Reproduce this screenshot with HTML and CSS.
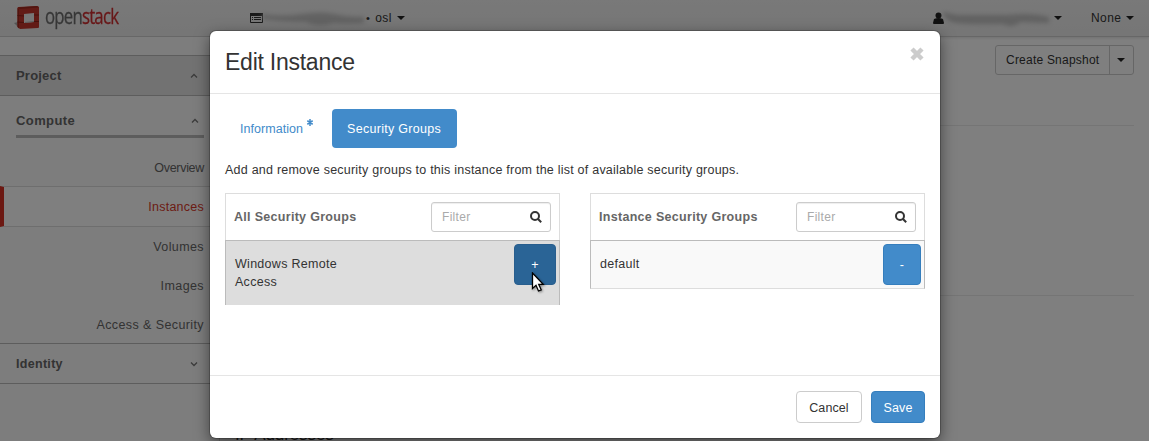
FILE: index.html
```html
<!DOCTYPE html>
<html lang="en">
<head>
<meta charset="utf-8">
<title>Edit Instance</title>
<link rel="stylesheet" href="styles.css">
</head>
<body>
<div class="page">
  <header class="topbar">
    <div class="brand">
      <svg class="logo" width="27" height="25" viewBox="0 0 27 25"><path fill="#aaa" d="M0 18l4-1v5z"/><path fill="#c5372c" d="M3.500 3q0-1 1-1L23 1q2 0 2 1.500V22q0 1-1 1L6 24l-2.500-2z"/><path fill="#a32a20" d="M3.500 3l1.500 1v19.500l-1.500-1.500zM4 2.500L23 1l2 1.500L6 4z"/><path fill="#eee" d="M10 9l10-1v9l-10 1z"/><path fill="#b9b9b9" d="M11 17l9-1v1l-9 1z"/><path stroke="#8f2219" d="M3.500 10.500l6.500.5M3.500 17l6.500.5M20 10h5M20 16.500h5" fill="none"/></svg>
      <span class="wordmark">open<b>stack</b></span>
    </div>
    <div class="context">
      <svg width="13" height="12" viewBox="0 0 13 12"><path fill="none" stroke="#333" d="M.5 1.500h12v9H.5z"/><path fill="#333" d="M0 1h13v3H0zM2 5h1v1H2zm2 0h7v1H4zM2 7h1v1H2zm2 0h7v1H4z"/></svg>
      <svg class="smudge" width="103" height="15" viewBox="0 0 103 15"><path d="M0 3Q20 6 40 3t32 0 30 3v6q-18 1-30 0-16 5-28-1-24 0-43-3z"/></svg>
      <span class="dot">•</span><span class="region">osl</span><i class="caret"></i>
    </div>
    <div class="account">
      <svg width="11" height="12" viewBox="0 0 11 12"><circle cx="5.500" cy="3.500" r="3" fill="#222"/><path fill="#222" d="M1 7q4.500-2 9 0l1 4q0 1-1 1H1q-1 0-1-1z"/></svg>
      <svg class="smudge" width="108" height="15" viewBox="0 0 108 15"><path d="M0 1l14 3q40 0 50 0 24-3 42 2v6q-14 0-28-1-10 7-18 2-30 1-48-1-9-2-12-9z"/></svg>
      <i class="caret"></i>
    </div>
    <div class="none">None<i class="caret"></i></div>
  </header>
  <div class="columns">
    <nav class="sidebar">
      <div class="panel project">Project<svg class="chev" width="8" height="6" viewBox="0 0 8 6"><path d="M1 4.500l3-3 3 3"/></svg></div>
      <div class="group"><div class="compute">Compute<svg class="chev" width="8" height="6" viewBox="0 0 8 6"><path d="M1 4.500l3-3 3 3"/></svg></div></div>
      <a class="item overview">Overview</a>
      <a class="item active">Instances</a>
      <a class="item">Volumes</a>
      <a class="item">Images</a>
      <a class="item access">Access &amp; Security</a>
      <div class="panel identity">Identity<svg class="chev" width="8" height="6" viewBox="0 0 8 6"><path d="M1 1.500l3 3 3-3"/></svg></div>
    </nav>
    <main class="content">
      <div class="actions"><div class="snapshot"><span>Create Snapshot</span><div class="drop"><i class="caret"></i></div></div></div>
      <div class="rule first"></div>
      <div class="rule second"></div>
      <h4>IP Addresses</h4>
    </main>
  </div>
</div>
<div class="backdrop"></div>
<section class="modal">
  <div class="modal-head">
    <h3>Edit Instance</h3>
    <svg class="close" width="14" height="14" viewBox="0 0 14 14"><path d="M2 2l10 10M12 2L2 12"/></svg>
  </div>
  <div class="modal-body">
    <div class="tabs">
      <a class="tab info">Information<svg width="6" height="7" viewBox="0 0 6 7"><path d="M3 0v7M.3 1.700l5.400 3.600M5.700 1.700L.3 5.300"/></svg></a>
      <a class="tab selected">Security Groups</a>
    </div>
    <p class="help">Add and remove security groups to this instance from the list of available security groups.</p>
    <div class="lists">
      <div class="list">
        <div class="list-head"><span class="all">All Security Groups</span>
          <div class="filter"><span>Filter</span><svg width="12" height="12" viewBox="0 0 12 12"><circle cx="5" cy="5" r="4"/><path d="M8 8l3.200 3.200"/></svg></div></div>
        <div class="row hovered"><span class="label">Windows Remote<br>Access</span><div class="move add">+</div></div>
      </div>
      <div class="list">
        <div class="list-head"><span>Instance Security Groups</span>
          <div class="filter"><span>Filter</span><svg width="12" height="12" viewBox="0 0 12 12"><circle cx="5" cy="5" r="4"/><path d="M8 8l3.200 3.200"/></svg></div></div>
        <div class="row"><span class="label">default</span><div class="move">-</div></div>
      </div>
    </div>
  </div>
  <div class="modal-foot"><div class="btn cancel">Cancel</div><div class="btn save">Save</div></div>
</section>
<svg class="cursor" width="15" height="22" viewBox="0 0 15 22"><path fill="#fff" stroke="#000" stroke-width="1.300" d="M1.500 1v15.500l3.500-3.200 2.500 5.700 2.700-1.200-2.500-5.500h4.500z"/></svg>
</body>
</html>
```

FILE: styles.css
```css
* { box-sizing: border-box; }
body { margin: 0; width: 1149px; height: 441px; overflow: hidden; position: relative; background: #fff; color: #333; font: 12.500px/18px "Liberation Sans", Arial, sans-serif; letter-spacing: .23px; }
h3, h4, p { margin: 0; font-weight: normal; }
svg { flex: none; }
.page { height: 441px; overflow: hidden; }
.topbar { height: 37px; display: flex; align-items: center; background: linear-gradient(#f2f2f2, #ececec); border-bottom: 1px solid #cecece; box-shadow: 0 1px 3px rgba(0,0,0,.12); font-size: 12px; letter-spacing: .4px; }
.brand { display: flex; width: 250px; padding-left: 14px; gap: 4px; align-items: center; }
.logo { margin-top: -2px; }
.wordmark { font: 21.500px/24px "Open Sans", sans-serif; letter-spacing: -1px; color: #6d6d6d; transform: scaleX(.78); transform-origin: 0 50%; margin-top: -4px; -webkit-text-stroke: .3px; }
.wordmark b { font-weight: normal; color: #cf2f31; }
.context { width: 683px; display: flex; align-items: center; }
.smudge { margin-left: -1px; filter: blur(2px); fill: #c4c4c4; }
.dot { margin: 0 5px 0 1px; font-size: 11px; }
.caret { display: inline-block; border: 4px solid transparent; border-top-color: #222; border-bottom: 0; margin-left: 5px; }
.account { display: flex; width: 158px; align-items: center; }
.account .caret { margin-left: 3px; }
.none { display: flex; align-items: center; }
.columns { display: flex; height: 404px; }
.sidebar { width: 220px; padding-top: 18px; background: #fafafa; border-right: 1px solid #ddd; color: #666; letter-spacing: .4px; }
.panel { height: 41px; display: flex; align-items: center; justify-content: space-between; padding: 0 21px 0 16px; border: solid #bbb; border-width: 1px 0; font-weight: bold; }
.project { background: #e5e5e5; font-size: 13px; letter-spacing: .2px; }
.identity { letter-spacing: .3px; }
.chev { fill: none; stroke: #777; stroke-width: 1.300; }
.group { padding: 14px 15px 0 16px; height: 52px; }
.compute { height: 28px; display: flex; align-items: flex-start; justify-content: space-between; padding: 2px 5px 0 0; border-bottom: 3px solid #bbb; font-size: 13px; font-weight: bold; }
.compute .chev { margin-top: 6px; }
.item { display: flex; height: 39px; align-items: center; justify-content: flex-end; padding-right: 15px; }
.overview { height: 38px; padding-top: 1px; letter-spacing: -.3px; }
.item.active { height: 41px; border: solid #ddd; border-width: 1px 0; border-left: 4px solid #d93025; background: #fff; color: #d93a2b; letter-spacing: .25px; }
.access { height: 38px; padding-top: 1px; }
.content { flex: 1; padding: 8px 15px 0; }
.actions { display: flex; justify-content: flex-end; }
.snapshot { display: flex; height: 30px; border: 1px solid #ccc; border-radius: 3px; font-size: 12px; line-height: 28px; letter-spacing: .22px; }
.snapshot span { width: 113px; padding-left: 10px; white-space: nowrap; }
.drop { width: 24px; border-left: 1px solid #ccc; display: flex; align-items: center; }
.drop .caret { margin-left: 7px; }
.rule { border-top: 1px solid #eaeaea; height: 170px; }
.rule.first { margin-top: 50px; }
.rule.second { height: 130px; }
h4 { font-size: 17px; line-height: 20px; letter-spacing: -.1px; }
.backdrop { position: absolute; inset: 0; background: rgba(0,0,0,.5); }
.modal { position: absolute; left: 210px; top: 31px; width: 730px; height: 407px; display: flex; flex-direction: column; background: #fff; border-radius: 6px; box-shadow: 0 0 0 1px rgba(0,0,0,.2), 0 5px 15px rgba(0,0,0,.5); }
.modal-head { height: 63px; display: flex; justify-content: space-between; padding: 15px 16px 0 15px; border-bottom: 1px solid #e5e5e5; }
h3 { font-size: 23px; line-height: 32px; letter-spacing: -.25px; }
.close { fill: none; stroke: #ccc; stroke-width: 4.500; overflow: visible; margin-top: 1px; }
.modal-body { flex: 1; padding: 15px 15px 0; }
.tabs { display: flex; gap: 3px; height: 39px; color: #428bca; line-height: 40px; }
.tab { padding-left: 15px; white-space: nowrap; }
.info { width: 104px; display: flex; letter-spacing: .05px; }
.info svg { margin: 10px 0 0 4px; stroke: #428bca; stroke-width: 1.500; }
.selected { width: 125px; border-radius: 4px; background: #428bca; color: #fff; letter-spacing: .3px; }
.help { margin-top: 13px; white-space: nowrap; }
.lists { display: grid; grid-template-columns: 335px 335px; gap: 30px; align-items: start; margin-top: 14px; }
.list-head { height: 47px; border: 1px solid #ddd; border-bottom: 0; display: flex; align-items: center; justify-content: space-between; padding: 0 8px; color: #666; font-weight: bold; letter-spacing: .3px; }
.filter { width: 120px; height: 30px; display: flex; align-items: center; justify-content: space-between; padding: 0 8px 0 10px; border: 1px solid #ccc; border-radius: 3px; color: #aaa; font-weight: normal; font-size: 12px; box-shadow: inset 0 1px 1px rgba(0,0,0,.07); }
.filter svg { fill: none; stroke: #333; stroke-width: 2; }
.row { height: 49px; display: flex; justify-content: space-between; padding: 3px 3px 0 9px; background: #f9f9f9; border: 1px solid #bbb; border-bottom-color: #ddd; }
.row.hovered { height: 65px; background: #ddd; border-bottom: 0; }
.label { padding-top: 11px; letter-spacing: .28px; }
.move { width: 38px; height: 41px; border: 1px solid #357ebd; border-radius: 4px; background: #428bca; color: #fff; text-align: center; line-height: 40px; }
.move.add { width: 42px; background: #2a6496; border-color: #285e8e; }
.modal-foot { height: 63px; display: flex; justify-content: flex-end; gap: 9px; padding: 15px 15px 0; border-top: 1px solid #e5e5e5; }
.btn { height: 32px; border: 1px solid #ccc; border-radius: 4px; text-align: center; line-height: 32px; letter-spacing: .1px; }
.cancel { width: 66px; }
.save { width: 54px; background: #428bca; border-color: #357ebd; color: #fff; }
.cursor { position: absolute; left: 531px; top: 272px; filter: drop-shadow(1px 1px 1px rgba(0,0,0,.4)); }
```
